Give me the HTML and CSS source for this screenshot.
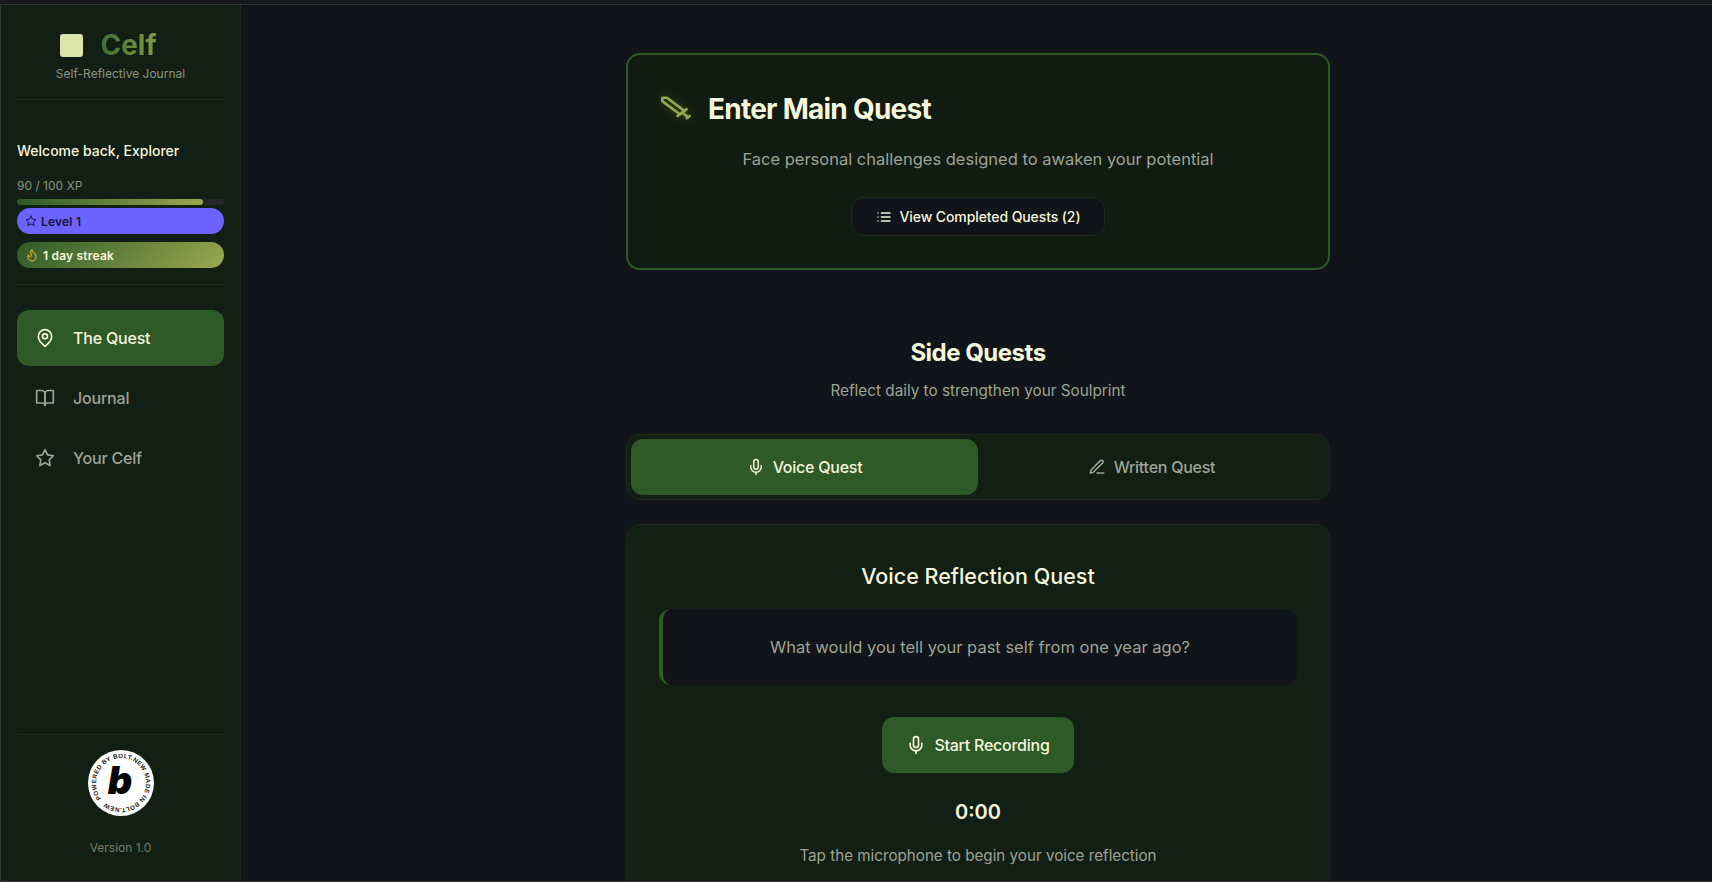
FILE: index.html
```html
<!DOCTYPE html>
<html lang="en">
<head>
<meta charset="utf-8">
<title>Celf</title>
<link rel="stylesheet" href="styles.css">
</head>
<body>
<div class="topbar"></div>
<div class="app">
  <aside class="sidebar">
    <header class="brand">
      <div class="brand-row">
        <span class="brand-mark"></span>
        <span class="brand-name">Celf</span>
      </div>
      <p class="brand-tag">Self-Reflective Journal</p>
    </header>
    <section class="profile">
      <p class="welcome">Welcome back, Explorer</p>
      <p class="xp-label">90 / 100 XP</p>
      <div class="xp-track"><div class="xp-fill" style="width:90%"></div></div>
      <div class="pill pill-level">
        <svg class="icon i12" viewBox="0 0 24 24"><polygon points="12 2 15.09 8.26 22 9.27 17 14.14 18.18 21.02 12 17.77 5.82 21.02 7 14.14 2 9.27 8.91 8.26 12 2"/></svg>
        <span>Level 1</span>
      </div>
      <div class="pill pill-streak">
        <svg class="icon i14 flame" viewBox="0 0 24 24"><path d="M8.5 14.5A2.5 2.5 0 0 0 11 12c0-1.38-.5-2-1-3-1.072-2.143-.224-4.054 2-6 .5 2.5 2 4.9 4 6.5 2 1.6 3 3.5 3 5.5a7 7 0 1 1-14 0c0-1.153.433-2.294 1-3a2.5 2.5 0 0 0 2.5 2.5z"/></svg>
        <span>1 day streak</span>
      </div>
    </section>
    <nav class="nav">
      <a class="nav-item active">
        <svg class="icon i20" viewBox="0 0 24 24"><path d="M20 10c0 6-8 12-8 12s-8-6-8-12a8 8 0 0 1 16 0Z"/><circle cx="12" cy="10" r="3"/></svg>
        <span>The Quest</span>
      </a>
      <a class="nav-item">
        <svg class="icon i20" viewBox="0 0 24 24"><path d="M2 3h6a4 4 0 0 1 4 4v14a3 3 0 0 0-3-3H2z"/><path d="M22 3h-6a4 4 0 0 0-4 4v14a3 3 0 0 1 3-3h7z"/></svg>
        <span>Journal</span>
      </a>
      <a class="nav-item">
        <svg class="icon i20" viewBox="0 0 24 24"><polygon points="12 2 15.09 8.26 22 9.27 17 14.14 18.18 21.02 12 17.77 5.82 21.02 7 14.14 2 9.27 8.91 8.26 12 2"/></svg>
        <span>Your Celf</span>
      </a>
    </nav>
    <footer class="side-foot">
      <svg class="badge" viewBox="0 0 66 66">
        <circle cx="33" cy="33" r="33" fill="#fff"/>
        <defs><path id="ring" d="M33 33 m-25 0 a25 25 0 1 1 50 0 a25 25 0 1 1 -50 0"/></defs>
        <g transform="rotate(-38 33 33)">
          <text class="badge-ring"><textPath href="#ring" startOffset="0" textLength="150" lengthAdjust="spacing">POWERED BY BOLT.NEW MADE IN BOLT.NEW</textPath></text>
        </g>
        <text class="badge-b" x="32" y="44" text-anchor="middle">b</text>
      </svg>
      <p class="version">Version 1.0</p>
    </footer>
  </aside>

  <main class="main">
    <div class="column">
      <section class="hero">
        <div class="hero-title">
          <svg class="icon sword" viewBox="1.5 1.5 21 21" preserveAspectRatio="none"><polyline points="14.5 17.5 3 6 3 3 6 3 17.5 14.5"/><line x1="13" x2="19" y1="19" y2="13"/><line x1="16" x2="20" y1="16" y2="20"/><line x1="19" x2="21" y1="21" y2="19"/></svg>
          <h1>Enter Main Quest</h1>
        </div>
        <p class="hero-sub">Face personal challenges designed to awaken your potential</p>
        <button class="ghost-btn">
          <svg class="icon i16" viewBox="0 0 24 24"><line x1="8" x2="21" y1="6" y2="6"/><line x1="8" x2="21" y1="12" y2="12"/><line x1="8" x2="21" y1="18" y2="18"/><line x1="3" x2="3.01" y1="6" y2="6"/><line x1="3" x2="3.01" y1="12" y2="12"/><line x1="3" x2="3.01" y1="18" y2="18"/></svg>
          <span>View Completed Quests (2)</span>
        </button>
      </section>

      <section class="side-head">
        <h2>Side Quests</h2>
        <p>Reflect daily to strengthen your Soulprint</p>
      </section>

      <div class="tabs">
        <button class="tab active">
          <svg class="icon i18" viewBox="0 0 24 24"><path d="M12 2a3 3 0 0 0-3 3v7a3 3 0 0 0 6 0V5a3 3 0 0 0-3-3Z"/><path d="M19 10v2a7 7 0 0 1-14 0v-2"/><line x1="12" x2="12" y1="19" y2="22"/></svg>
          <span>Voice Quest</span>
        </button>
        <button class="tab">
          <svg class="icon i18" viewBox="0 0 24 24"><path d="M12 20h9"/><path d="M16.5 3.5a2.121 2.121 0 0 1 3 3L7 19l-4 1 1-4Z"/></svg>
          <span>Written Quest</span>
        </button>
      </div>

      <section class="voice">
        <h3>Voice Reflection Quest</h3>
        <div class="prompt">What would you tell your past self from one year ago?</div>
        <button class="record">
          <svg class="icon i20" viewBox="0 0 24 24"><path d="M12 2a3 3 0 0 0-3 3v7a3 3 0 0 0 6 0V5a3 3 0 0 0-3-3Z"/><path d="M19 10v2a7 7 0 0 1-14 0v-2"/><line x1="12" x2="12" y1="19" y2="22"/></svg>
          <span>Start Recording</span>
        </button>
        <div class="timer">0:00</div>
        <p class="hint">Tap the microphone to begin your voice reflection</p>
      </section>
    </div>
  </main>
</div>
</body>
</html>
```

FILE: styles.css
```css
* { box-sizing: border-box; }
html, body { height: 100%; margin: 0; }
body {
  display: flex;
  flex-direction: column;
  overflow: hidden;
  background: #111418;
  color: #f5f5dc;
  font-family: Inter, "Liberation Sans", sans-serif;
}
p, h1, h2, h3 { margin: 0; }
button { font-family: inherit; cursor: pointer; }

.topbar {
  flex: 0 0 5px;
  background: #18191b;
  border-bottom: 1px solid #34373a;
}
.app {
  flex: 1;
  min-height: 0;
  display: flex;
  border-left: 1px solid #33373a;
  border-bottom: 1px solid #33373a;
}

.icon {
  flex: none;
  fill: none;
  stroke: currentColor;
  stroke-width: 2;
  stroke-linecap: round;
  stroke-linejoin: round;
}
.i12 { width: 12px; height: 12px; }
.i14 { width: 14px; height: 14px; }
.i16 { width: 16px; height: 16px; }
.i18 { width: 18px; height: 18px; }
.i20 { width: 20px; height: 20px; }

/* Sidebar */
.sidebar {
  flex: 0 0 240px;
  display: flex;
  flex-direction: column;
  padding: 0 16px;
  background: #121f14;
  border-right: 1px solid #1a2c1c;
}
.brand {
  height: 95px;
  padding-top: 25px;
  text-align: center;
  border-bottom: 1px solid #1b2e1d;
}
.brand-row {
  display: flex;
  align-items: center;
  justify-content: center;
  gap: 17px;
  height: 30px;
  padding-right: 24px;
}
.brand-mark {
  width: 23px;
  height: 23px;
  border-radius: 3px;
  background: #dbe5ab;
}
.brand-name {
  font-size: 28px;
  line-height: 30px;
  font-weight: 700;
  background: linear-gradient(90deg, #3f6f35, #7f9a42);
  -webkit-background-clip: text;
  background-clip: text;
  color: transparent;
}
.brand-tag {
  margin-top: 6px;
  font-size: 12px;
  line-height: 16px;
  color: #8a9482;
}

.profile {
  padding: 41px 0 16px;
  border-bottom: 1px solid #1b2e1d;
}
.welcome {
  font-size: 14px;
  line-height: 20px;
  font-weight: 500;
  margin-bottom: 17px;
}
.xp-label {
  font-size: 12px;
  line-height: 16px;
  color: #8a9482;
  margin-bottom: 5px;
}
.xp-track {
  height: 6px;
  border-radius: 3px;
  background: #23262a;
  overflow: hidden;
}
.xp-fill {
  height: 100%;
  border-radius: 3px;
  background: linear-gradient(90deg, #2d5a27, #9aa84f);
}
.pill {
  display: flex;
  align-items: center;
  gap: 4px;
  height: 26px;
  padding: 0 8px;
  border-radius: 13px;
  font-size: 12px;
  font-weight: 600;
  letter-spacing: 0.2px;
}
.pill-level {
  margin-top: 3px;
  background: #6c63ff;
  color: #14143a;
}
.pill-streak {
  margin-top: 8px;
  background: linear-gradient(135deg, #2d5a27, #9aa84f);
  color: #f5f5dc;
}
.flame { color: #dca52e; }

.nav {
  display: flex;
  flex-direction: column;
  gap: 4px;
  padding-top: 25px;
}
.nav-item {
  display: flex;
  align-items: center;
  gap: 18px;
  height: 56px;
  padding: 0 18px;
  border-radius: 12px;
  font-size: 16px;
  font-weight: 500;
  letter-spacing: -0.2px;
  color: #9ea396;
}
.nav-item.active {
  background: #2d5a27;
  color: #f5f5dc;
}

.side-foot {
  margin-top: auto;
  padding: 15px 0 25px;
  display: flex;
  flex-direction: column;
  align-items: center;
  border-top: 1px solid #1b2e1d;
}
.badge {
  width: 66px;
  height: 66px;
  margin-left: 1px;
}
.badge-ring {
  font-family: "Liberation Sans", sans-serif;
  font-size: 6.2px;
  font-weight: 700;
  fill: #222;
}
.badge-b {
  font-size: 38px;
  font-weight: 900;
  font-style: italic;
  fill: #000;
}
.version {
  margin-top: 24px;
  font-size: 12px;
  line-height: 16px;
  color: #737d6c;
}

/* Main */
.main {
  flex: 1;
  min-width: 0;
  overflow: hidden;
  padding: 48px 0 0 3px;
}
.column {
  width: 704px;
  margin: 0 auto;
}
.hero {
  height: 217px;
  padding: 30px 32px 0;
  border: 2px solid #2d5a27;
  border-radius: 14px;
  background: #101b12;
  display: flex;
  flex-direction: column;
  align-items: center;
}
.hero-title {
  align-self: flex-start;
  display: flex;
  align-items: center;
  gap: 16px;
  height: 48px;
}
.sword {
  width: 32px;
  height: 24px;
  margin-bottom: 3px;
  color: #9aa84f;
  filter: drop-shadow(0 0 5px rgba(154, 168, 79, .35));
}
.sword * {
  vector-effect: non-scaling-stroke;
  stroke-width: 2.6px;
}
.hero-title h1 {
  font-size: 28px;
  line-height: 36px;
  font-weight: 700;
  letter-spacing: -0.75px;
}
.hero-sub {
  margin-top: 14px;
  font-size: 16.5px;
  line-height: 24px;
  color: #9ea396;
}
.ghost-btn {
  display: flex;
  align-items: center;
  gap: 8px;
  height: 39px;
  margin-top: 26px;
  padding: 0 24px;
  border: 1px solid #1a2c1c;
  border-radius: 12px;
  background: #111418;
  color: #f5f5dc;
  font-size: 14px;
  font-weight: 500;
  letter-spacing: -0.1px;
}

.side-head {
  margin-top: 67px;
  text-align: center;
}
.side-head h2 {
  font-size: 24px;
  line-height: 32px;
  font-weight: 700;
  letter-spacing: -0.5px;
}
.side-head p {
  margin-top: 10px;
  font-size: 15.3px;
  line-height: 24px;
  color: #9ea396;
}

.tabs {
  display: flex;
  margin-top: 31px;
  padding: 4px;
  border: 1px solid #1a2c1c;
  border-radius: 14px;
  background: #121f14;
}
.tab {
  flex: 1;
  display: flex;
  align-items: center;
  justify-content: center;
  gap: 8px;
  height: 56px;
  border: 0;
  border-radius: 12px;
  background: transparent;
  color: #9ea396;
  font-size: 16px;
  font-weight: 500;
  letter-spacing: -0.25px;
}
.tab.active {
  background: #2d5a27;
  color: #f5f5dc;
}

.voice {
  margin-top: 24px;
  padding: 31px 32px 32px;
  min-height: 400px;
  border: 1px solid #1a2c1c;
  border-radius: 14px;
  background: #121f14;
  display: flex;
  flex-direction: column;
  align-items: center;
}
.voice h3 {
  font-size: 21.5px;
  line-height: 40px;
  font-weight: 500;
}
.prompt {
  align-self: stretch;
  height: 76px;
  margin-top: 13px;
  display: flex;
  align-items: center;
  justify-content: center;
  border-left: 4px solid #2d5a27;
  border-radius: 12px;
  background: #111418;
  color: #9ea396;
  font-size: 16.5px;
}
.record {
  display: flex;
  align-items: center;
  gap: 8px;
  height: 56px;
  margin-top: 32px;
  padding: 0 24px;
  border: 0;
  border-radius: 12px;
  background: #2d5a27;
  color: #f5f5dc;
  font-size: 16px;
  font-weight: 500;
  letter-spacing: -0.25px;
}
.timer {
  margin-top: 25px;
  font-size: 20px;
  line-height: 28px;
  font-weight: 600;
}
.hint {
  margin-top: 18px;
  font-size: 15.2px;
  line-height: 24px;
  color: #9ea396;
}
```
